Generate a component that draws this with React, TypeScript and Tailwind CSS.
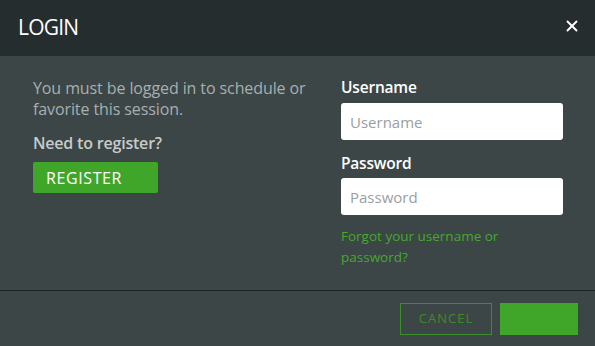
import { X } from 'lucide-react';

export default function App() {
  return (
    <div className="w-[595px] h-[346px] bg-[#3c4647] flex flex-col font-['Open_Sans',sans-serif]">
      {/* Header */}
      <div className="h-[56px] bg-[#262d2f] flex items-center justify-between pl-[18px] pr-[14px]">
        <h1 className="text-[21px] text-white tracking-[-0.8px]">LOGIN</h1>
        <X className="w-[18px] h-[18px] text-white -mt-[4px]" strokeWidth={2.5} />
      </div>

      {/* Body */}
      <div className="flex h-[235px] border-b border-[#1b2324]">
        <div className="w-[308px] pl-[33px] pt-[22px]">
          <p className="text-[16px] leading-[21px] text-[#a8afaf] tracking-[-0.1px]">
            You must be logged in to schedule or favorite this session.
          </p>
          <p className="mt-[13px] text-[16px] leading-[21px] font-semibold text-[#c6cbcb] tracking-[-0.2px]">
            Need to register?
          </p>
          <button className="mt-[8px] w-[125px] h-[31px] bg-[#3fa62a] text-white text-[16px] tracking-[0.6px] text-left pl-[13px] rounded-[2px]">
            REGISTER
          </button>
        </div>
        <div className="pl-[33px] pt-[21px] w-[255px]">
          <label className="block text-[15.5px] leading-[21px] font-semibold text-white tracking-[-0.2px]">Username</label>
          <input
            placeholder="Username"
            className="mt-[5px] w-[222px] h-[37px] bg-white rounded-[3px] px-[9px] text-[15px] placeholder:text-[#9aa0a0] outline-none"
          />
          <label className="block mt-[13px] text-[15.5px] leading-[21px] font-semibold text-white tracking-[-0.2px]">Password</label>
          <input
            type="password"
            placeholder="Password"
            className="mt-[4px] w-[222px] h-[37px] bg-white rounded-[3px] px-[9px] text-[15px] placeholder:text-[#9aa0a0] outline-none"
          />
          <a className="block mt-[11px] text-[13.5px] leading-[21px] text-[#46a82e]">
            Forgot your username or
            <br />
            password?
          </a>
        </div>
      </div>

      {/* Footer */}
      <div className="flex justify-end gap-[8px] pt-[12px] pr-[17px]">
        <button className="w-[92px] h-[32px] border border-[#3a8f2a] text-[#3c8a2c] text-[13px] tracking-[1px]">
          CANCEL
        </button>
        <button className="w-[78px] h-[32px] bg-[#3fa62a]"></button>
      </div>
    </div>
  );
}
